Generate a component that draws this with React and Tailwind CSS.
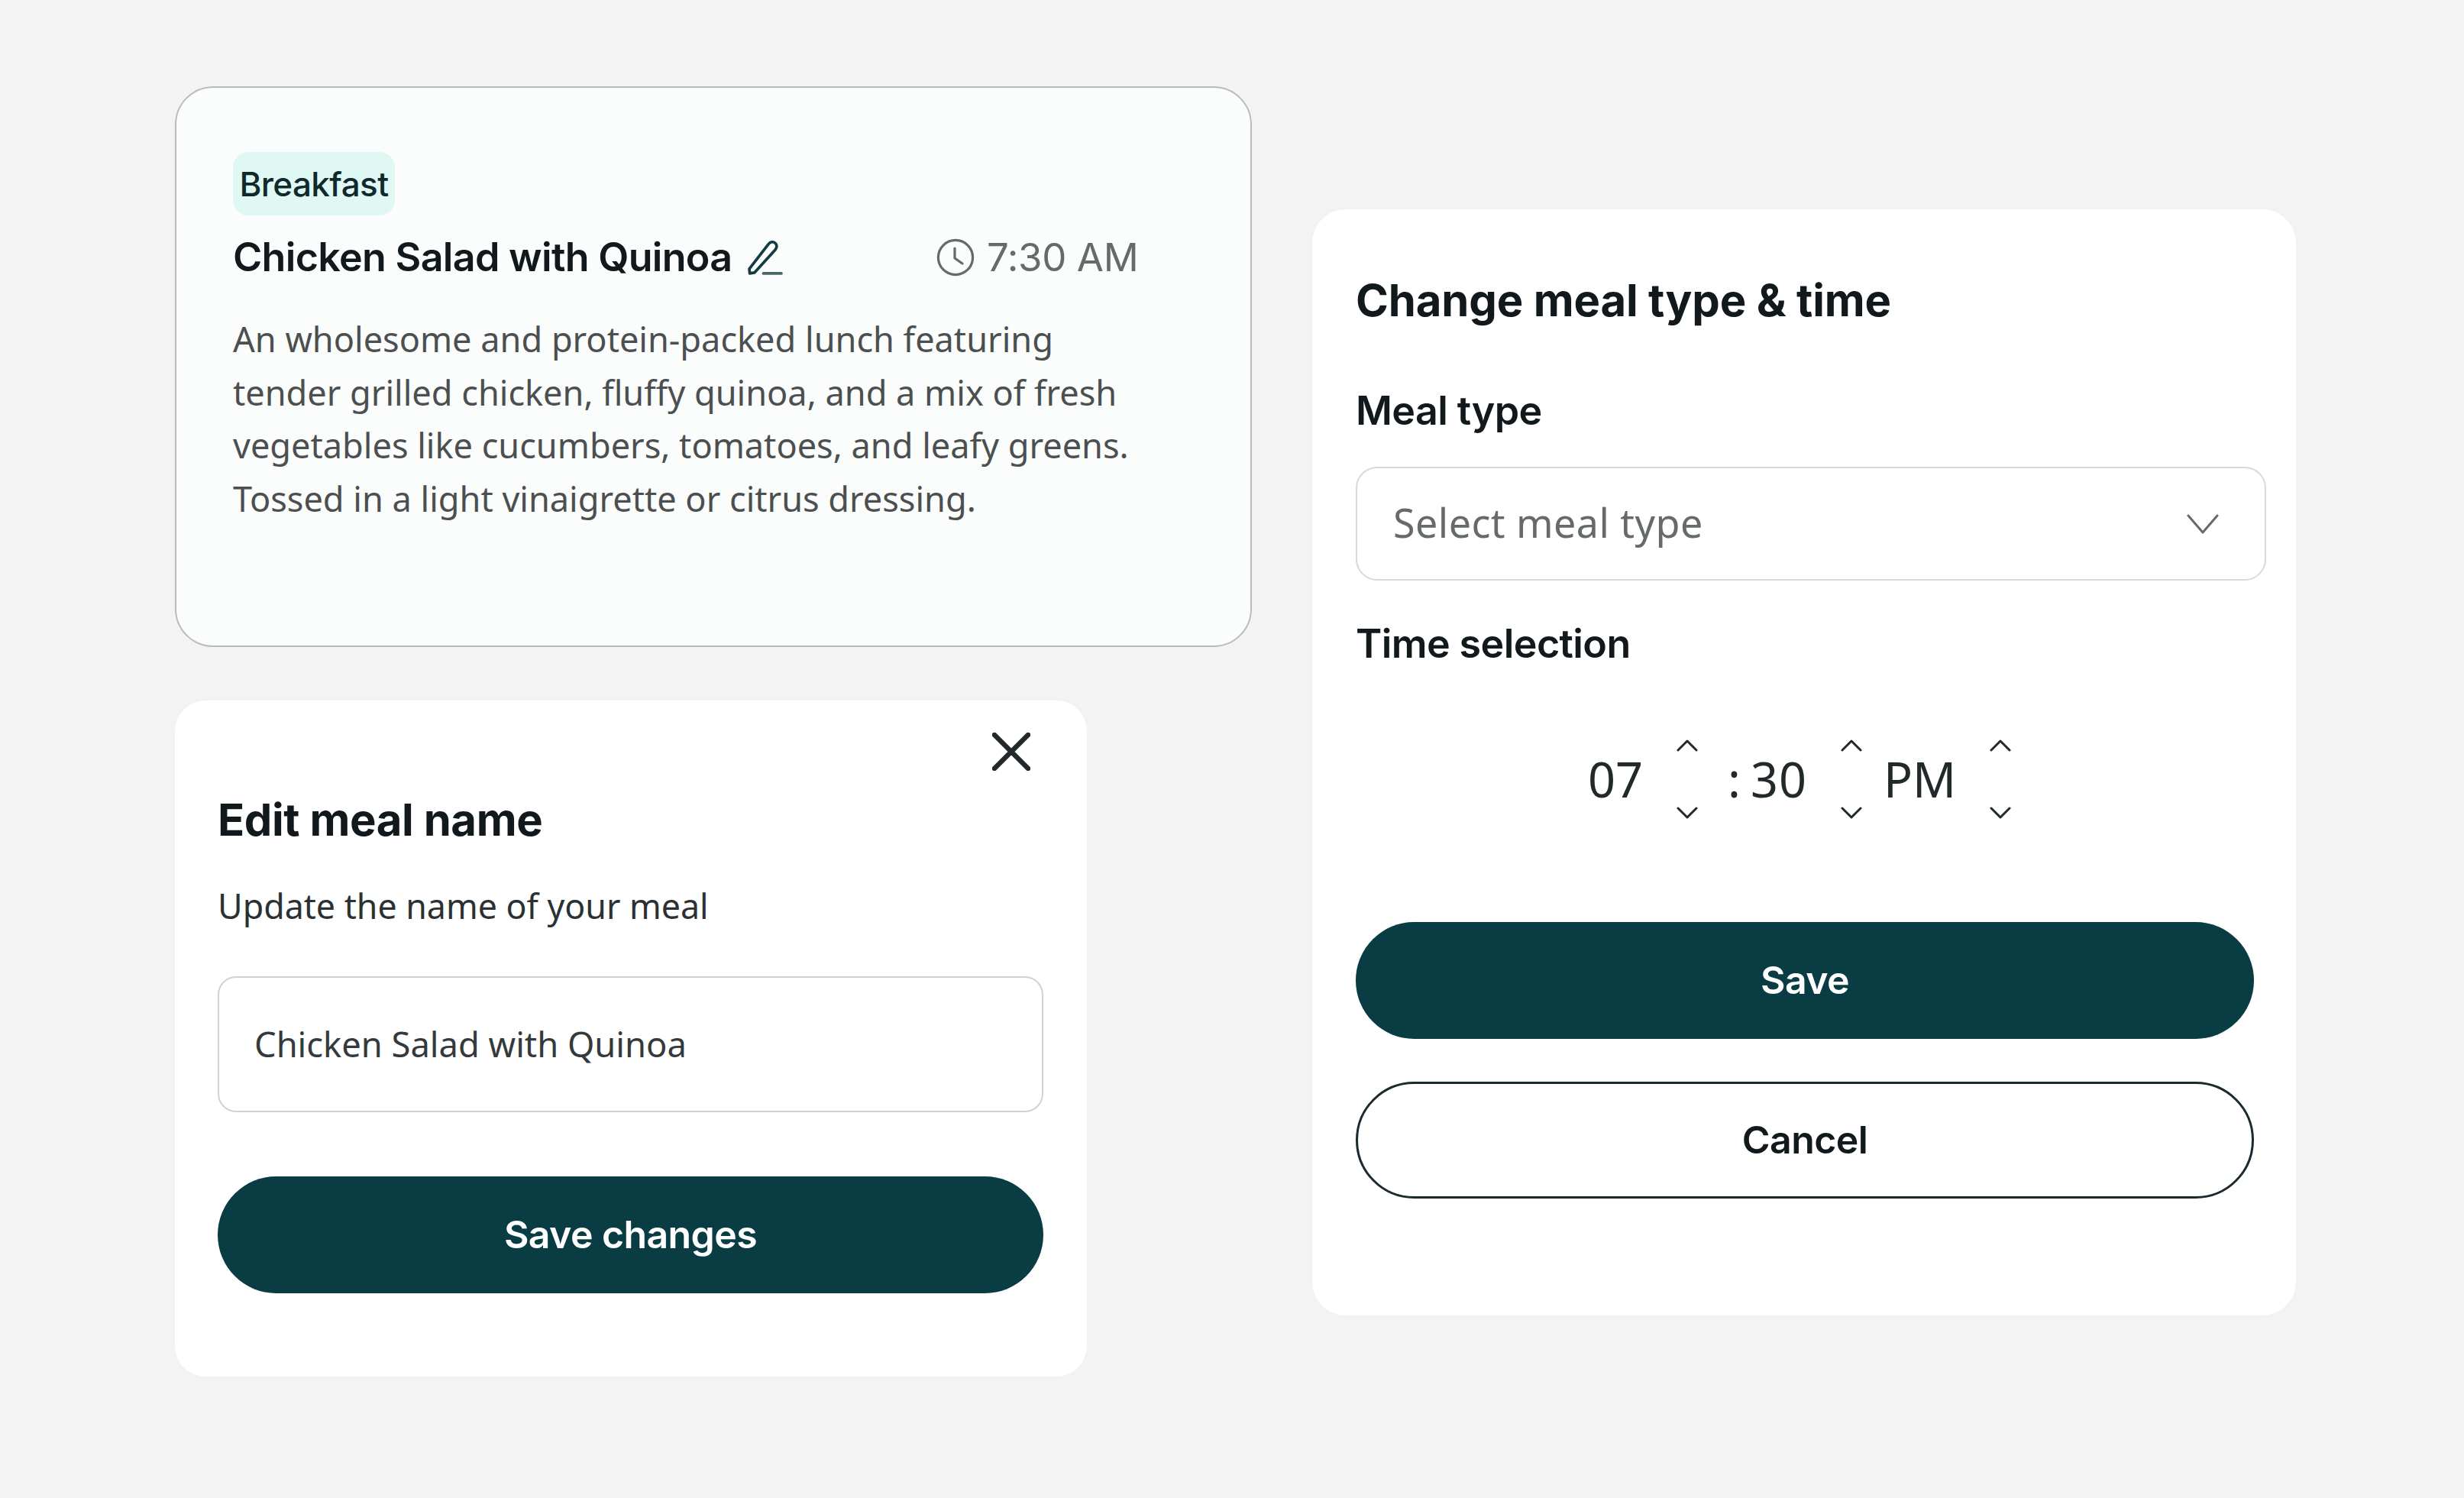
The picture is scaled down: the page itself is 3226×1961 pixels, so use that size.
const HEAD = { fontFamily: '"Inter", "Noto Sans", sans-serif' };
const BODY = { fontFamily: '"Noto Sans", sans-serif' };

function Chevron({ up }) {
  return (
    <svg viewBox="0 0 28 16" className="w-[28px] h-[16px]" fill="none" stroke="#22292b" strokeWidth="3" strokeLinecap="round" strokeLinejoin="round">
      <path d={up ? "M2 14 L14 2 L26 14" : "M2 2 L14 14 L26 2"} />
    </svg>
  );
}

function Spinner() {
  return (
    <div className="flex flex-col justify-between h-[104px] w-[28px]">
      <Chevron up />
      <Chevron />
    </div>
  );
}

function MealCard() {
  return (
    <section className="w-[1410px] h-[734px] rounded-[50px] border-2 border-[#b9bcbc] bg-[#fbfcfc] pl-[74px] pt-[84px]">
      <div className="w-[212px] h-[83px] rounded-[20px] bg-[#e0f8f3] flex items-center justify-center text-[44px] font-medium tracking-[-0.6px] text-[#10292d]">Breakfast</div>
      <div className="flex items-center h-[64px] mt-[23px]">
        <h2 className="text-[52px] font-semibold leading-[64px] tracking-[-0.7px] text-[#11191c] w-[653px] whitespace-nowrap">Chicken Salad with Quinoa</h2>
        <svg viewBox="0 0 46 46" className="w-[47px] h-[47px] ml-[20px]" fill="none" strokeLinecap="round">
          <path d="M3 37 L3.5 43 L9.5 42 L36 13 C39 9.5 38.5 6 36 4 C33.5 2 30 2.5 27.5 5.5 Z" stroke="#123c43" strokeWidth="3.6" strokeLinejoin="round" />
          <path d="M21 43 L44 43" stroke="#4b6468" strokeWidth="3.6" />
        </svg>
        <svg viewBox="0 0 50 50" className="w-[50px] h-[50px] ml-[201px]" fill="none" stroke="#666a6b" strokeWidth="3.2" strokeLinecap="round" strokeLinejoin="round">
          <circle cx="25" cy="25" r="22.6" />
          <path d="M24 13 L24 26 L34 33" />
        </svg>
        <span className="text-[51px] leading-[64px] ml-[16px] text-[#666a6b] tracking-[-0.4px] whitespace-nowrap">7:30 AM</span>
      </div>
      <p className="mt-[40px] text-[45.1px] leading-[69.6px] text-[#4c4f50] whitespace-pre-line" style={BODY}>
        {"An wholesome and protein-packed lunch featuring\ntender grilled chicken, fluffy quinoa, and a mix of fresh\nvegetables like cucumbers, tomatoes, and leafy greens.\nTossed in a light vinaigrette or citrus dressing."}
      </p>
    </section>
  );
}

function EditCard() {
  return (
    <section className="w-[1194px] h-[885px] mt-[70px] rounded-[40px] bg-white shadow-[0_0_12px_rgba(0,0,0,0.015)] pl-[56px] pr-[57px] relative">
      <svg viewBox="0 0 50 50" className="w-[50px] h-[50px] absolute right-[74px] top-[42px]" fill="none" stroke="#22292b" strokeWidth="6.5" strokeLinecap="round">
        <path d="M3 3 L47 47 M47 3 L3 47" />
      </svg>
      <h2 className="pt-[118px] text-[58px] leading-[76px] font-bold tracking-[-0.4px] text-[#11191c]">Edit meal name</h2>
      <p className="mt-[45px] text-[44.7px] leading-[60px] text-[#2b3133]" style={BODY}>Update the name of your meal</p>
      <div className="mt-[62px] h-[178px] rounded-[24px] border-2 border-[#d0d2d2] flex items-center pl-[46px] text-[45.3px] text-[#343a3c]" style={BODY}>Chicken Salad with Quinoa</div>
      <button className="mt-[84px] w-full h-[153px] rounded-full bg-[#0a3c44] text-white text-[50px] font-semibold tracking-[-0.6px]">Save changes</button>
    </section>
  );
}

function ChangeCard() {
  return (
    <section className="w-[1288px] h-[1448px] mt-[161px] ml-[79px] rounded-[44px] bg-white shadow-[0_0_12px_rgba(0,0,0,0.015)] pl-[57px] pr-[39px]">
      <h2 className="pt-[81px] text-[58px] leading-[76px] font-bold tracking-[-0.15px] text-[#11191c] whitespace-nowrap">Change meal type &amp; time</h2>
      <h3 className="mt-[72px] text-[52px] leading-[70px] font-semibold tracking-[-0.6px] text-[#11191c]">Meal type</h3>
      <div className="mt-[38px] h-[149px] rounded-[28px] border-2 border-[#d8dada] flex items-center justify-between pl-[47px] pr-[60px] text-[52px] tracking-[0.45px] text-[#666a6b]" style={BODY}>
        <span className="-translate-y-[2px]">Select meal type</span>
        <svg viewBox="0 0 42 26" className="w-[42px] h-[26px]" fill="none" stroke="#666a6b" strokeWidth="3" strokeLinecap="round" strokeLinejoin="round">
          <path d="M2 2 L21 24 L40 2" />
        </svg>
      </div>
      <h3 className="mt-[48px] text-[52px] leading-[70px] font-semibold tracking-[-0.6px] text-[#11191c]">Time selection</h3>
      <div className="mt-[90px] h-[104px] flex items-center pl-[304px] text-[63px] leading-[104px] text-[#22292b]" style={BODY}>
        <span className="w-[116px]">07</span>
        <Spinner />
        <span className="ml-[39px] w-[30px]">:</span>
        <span className="w-[118px] tracking-[1px]">30</span>
        <Spinner />
        <span className="ml-[28px] w-[139px]">PM</span>
        <Spinner />
      </div>
      <div className="w-[1176px]">
        <button className="mt-[135px] block w-full h-[153px] rounded-full bg-[#0a3c44] text-white text-[50px] font-semibold tracking-[-0.6px]">Save</button>
        <button className="mt-[56px] block w-full h-[153px] rounded-full bg-white border-[3.5px] border-[#1b2a2e] text-[#11191c] text-[50px] font-semibold tracking-[-0.6px]">Cancel</button>
      </div>
    </section>
  );
}

export default function App() {
  return (
    <div className="w-[3226px] h-[1961px] bg-[#f3f3f3] overflow-hidden flex items-start pl-[229px] pt-[113px]" style={HEAD}>
      <div className="flex flex-col w-[1410px]">
        <MealCard />
        <EditCard />
      </div>
      <ChangeCard />
    </div>
  );
}
